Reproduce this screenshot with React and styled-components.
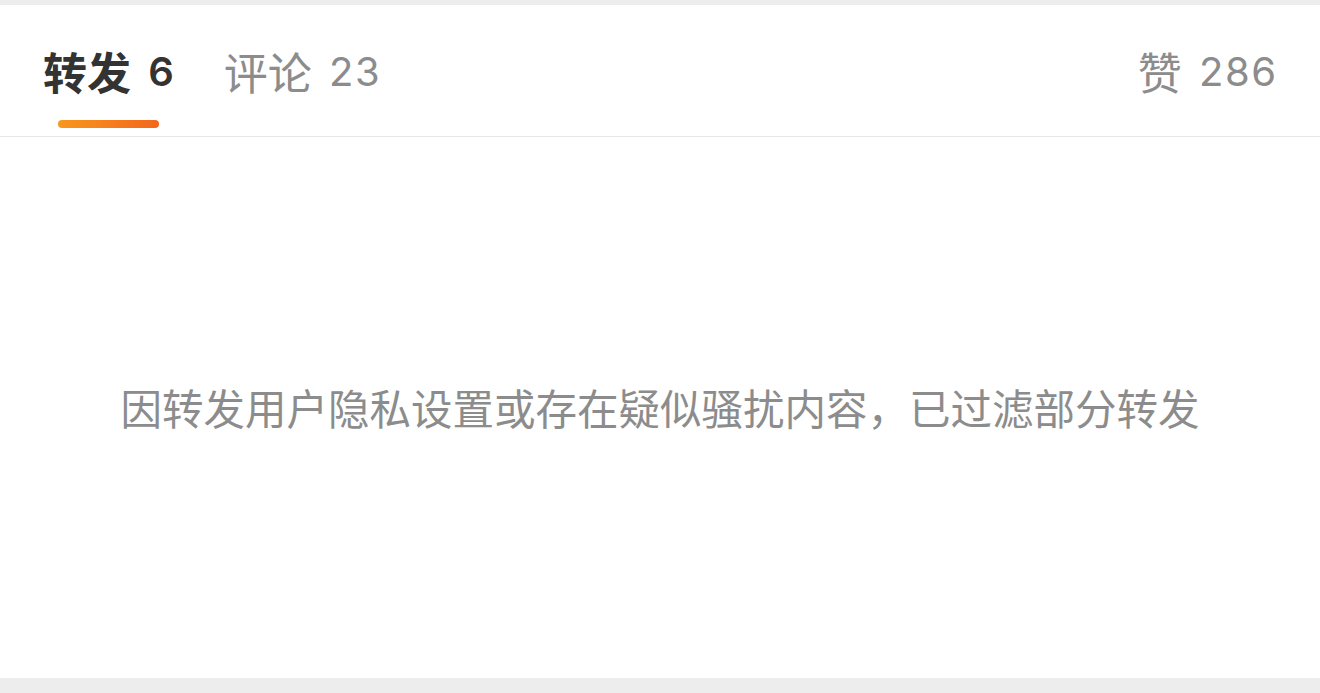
import styled, { createGlobalStyle } from "styled-components";

const GlobalStyle = createGlobalStyle`
  html, body {
    margin: 0;
    padding: 0;
    background: #ededed;
  }
  body {
    font-family: "Liberation Sans", "Noto Sans CJK SC", sans-serif;
  }
`;

const Page = styled.div`
  height: 693px;
  display: flex;
  flex-direction: column;
  padding: 5px 0 15px;
  box-sizing: border-box;
  background: #ededed;
`;

const Card = styled.div`
  flex: 1;
  display: flex;
  flex-direction: column;
  background: #fff;
`;

const TabBar = styled.div`
  height: 131px;
  display: flex;
  align-items: stretch;
  padding: 0 44px 0 43px;
  border-bottom: 1px solid #e6e6e6;
`;

const Tab = styled.div`
  position: relative;
  display: flex;
  align-items: center;
  padding-top: 1px;
  margin-right: ${(p) => (p.$last ? "0" : "50px")};
  margin-left: ${(p) => (p.$push ? "auto" : "0")};
  font-size: 44px;
  font-weight: ${(p) => (p.$active ? 700 : 400)};
  color: ${(p) => (p.$active ? "#333" : "#8c8c8c")};
  white-space: pre;
  word-spacing: 5px;
`;

const Count = styled.span`
  font-family: Inter, "Liberation Sans", sans-serif;
  font-size: 40px;
  font-weight: ${(p) => (p.$bold ? 600 : 400)};
  letter-spacing: 1.5px;
  margin-right: -1.5px;
`;

const Indicator = styled.span`
  position: absolute;
  left: 50%;
  bottom: 8px;
  width: 101px;
  height: 8px;
  margin-left: -50px;
  border-radius: 4px;
  background: linear-gradient(90deg, #f8971d, #f3661b);
`;

const Body = styled.div`
  flex: 1;
  display: flex;
  align-items: center;
  justify-content: center;
  padding-bottom: 2px;
  font-size: 41.5px;
  color: #8c8c8c;
`;

export default function App() {
  return (
    <>
      <GlobalStyle />
      <Page>
        <Card>
          <TabBar>
            <Tab $active>
              转发 <Count $bold>6</Count>
              <Indicator />
            </Tab>
            <Tab>
              评论 <Count>23</Count>
            </Tab>
            <Tab $push $last>
              赞 <Count>286</Count>
            </Tab>
          </TabBar>
          <Body>因转发用户隐私设置或存在疑似骚扰内容，已过滤部分转发</Body>
        </Card>
      </Page>
    </>
  );
}
